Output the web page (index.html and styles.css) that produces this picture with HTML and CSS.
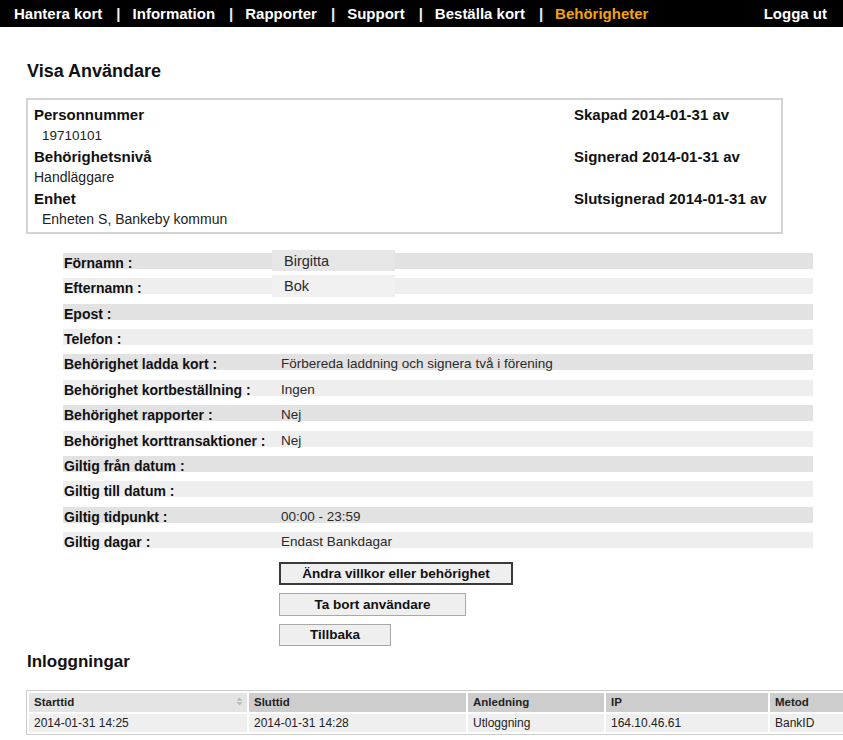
FILE: index.html
```html
<!DOCTYPE html>
<html lang="sv">
<head>
<meta charset="utf-8">
<title>Visa Användare</title>
<link rel="stylesheet" href="styles.css">
</head>
<body>
<nav class="topnav">
  <div class="nav-left">
    <a class="nav-link">Hantera kort</a><span class="sep">|</span>
    <a class="nav-link">Information</a><span class="sep">|</span>
    <a class="nav-link">Rapporter</a><span class="sep">|</span>
    <a class="nav-link">Support</a><span class="sep">|</span>
    <a class="nav-link">Beställa kort</a><span class="sep">|</span>
    <a class="nav-link active">Behörigheter</a>
  </div>
  <a class="nav-link">Logga ut</a>
</nav>

<main class="page">
  <h1 class="title">Visa Användare</h1>

  <section class="summary">
    <div class="sum-left">
      <div class="sum-label">Personnummer</div>
      <div class="sum-value indent small">19710101</div>
      <div class="sum-label">Behörighetsnivå</div>
      <div class="sum-value">Handläggare</div>
      <div class="sum-label">Enhet</div>
      <div class="sum-value indent">Enheten S, Bankeby kommun</div>
    </div>
    <div class="sum-right">
      <div class="sum-label">Skapad 2014-01-31 av</div>
      <div class="sum-gap"></div>
      <div class="sum-label">Signerad 2014-01-31 av</div>
      <div class="sum-gap"></div>
      <div class="sum-label">Slutsignerad 2014-01-31 av</div>
    </div>
  </section>

  <section class="details">
    <div class="row dark"><span class="lbl">Förnamn :</span><span class="field f-dark">Birgitta</span></div>
    <div class="row light"><span class="lbl">Efternamn :</span><span class="field f-light">Bok</span></div>
    <div class="row dark"><span class="lbl">Epost :</span><span class="val"></span></div>
    <div class="row light"><span class="lbl">Telefon :</span><span class="val"></span></div>
    <div class="row dark"><span class="lbl">Behörighet ladda kort :</span><span class="val">Förbereda laddning och signera två i förening</span></div>
    <div class="row light"><span class="lbl">Behörighet kortbeställning :</span><span class="val">Ingen</span></div>
    <div class="row dark"><span class="lbl">Behörighet rapporter :</span><span class="val">Nej</span></div>
    <div class="row light"><span class="lbl">Behörighet korttransaktioner :</span><span class="val">Nej</span></div>
    <div class="row dark"><span class="lbl">Giltig från datum :</span><span class="val"></span></div>
    <div class="row light"><span class="lbl">Giltig till datum :</span><span class="val"></span></div>
    <div class="row dark"><span class="lbl">Giltig tidpunkt :</span><span class="val">00:00 - 23:59</span></div>
    <div class="row light"><span class="lbl">Giltig dagar :</span><span class="val">Endast Bankdagar</span></div>
  </section>

  <div class="actions">
    <button class="btn btn-primary">Ändra villkor eller behörighet</button>
    <button class="btn btn-remove">Ta bort användare</button>
    <button class="btn btn-back">Tillbaka</button>
  </div>

  <h2 class="subtitle">Inloggningar</h2>

  <div class="table-wrap">
    <table class="logins">
      <colgroup>
        <col class="c-start">
        <col class="c-end">
        <col class="c-reason">
        <col class="c-ip">
        <col class="c-method">
      </colgroup>
      <thead>
        <tr>
          <th class="th-start"><svg class="sort" width="7" height="9" viewBox="0 0 7 9"><path d="M3.5 0.5 L6.5 3.8 H0.5 Z M3.5 8.5 L6.5 5.2 H0.5 Z" fill="#b8b8b8"/></svg>Starttid</th>
          <th>Sluttid</th>
          <th>Anledning</th>
          <th>IP</th>
          <th>Metod</th>
        </tr>
      </thead>
      <tbody>
        <tr>
          <td>2014-01-31 14:25</td>
          <td>2014-01-31 14:28</td>
          <td>Utloggning</td>
          <td>164.10.46.61</td>
          <td>BankID</td>
        </tr>
      </tbody>
    </table>
  </div>
</main>
</body>
</html>
```

FILE: styles.css
```css
* { box-sizing: border-box; }

html, body {
  margin: 0;
  padding: 0;
  background: #ffffff;
  font-family: "Liberation Sans", Arial, sans-serif;
  color: #111111;
  overflow: hidden;
}

/* top navigation */
.topnav {
  display: flex;
  justify-content: space-between;
  align-items: center;
  height: 27px;
  background: #000000;
  padding: 0 16px 0 14px;
  font-size: 15px;
  font-weight: bold;
  color: #ffffff;
}
.nav-left {
  display: flex;
  align-items: center;
}
.nav-link {
  color: #ffffff;
  text-decoration: none;
  white-space: nowrap;
}
.nav-link.active { color: #f2a40e; }
.sep {
  margin: 0 12px 0 14px;
  color: #f0f0f0;
  font-weight: bold;
}

/* page */
.page {
  padding: 0 0 0 27px;
}
.title {
  margin: 33px 0 16px 0;
  font-size: 18px;
  line-height: 22px;
  font-weight: bold;
}

/* summary box */
.summary {
  margin-left: -1px;
  width: 757px;
  border: 2px solid #d3d3d3;
  padding: 4px 0 2px 6px;
  display: grid;
  grid-template-columns: 1fr 207px;
}
.sum-label {
  font-size: 15px;
  font-weight: bold;
  line-height: 21px;
  white-space: nowrap;
}
.sum-value {
  font-size: 14px;
  line-height: 21px;
  color: #222222;
}
.sum-value.small { font-size: 13.5px; }
.sum-value.indent { padding-left: 8px; }
.sum-gap { height: 21px; }

/* details rows */
.details {
  margin: 19px 0 0 36px;
  width: 750px;
  display: grid;
  row-gap: 9.36px;
}
.row {
  display: grid;
  grid-template-columns: 209px 1fr;
  height: 16px;
  line-height: 20px;
}
.row.dark { background: #e2e2e2; }
.row.light { background: #eeeeee; }
.lbl {
  font-size: 14px;
  font-weight: bold;
  padding-left: 1px;
  white-space: nowrap;
  color: #111111;
}
.val {
  font-size: 13.5px;
  padding-left: 9px;
  color: #2a2a2a;
  white-space: nowrap;
}
.field {
  width: 123px;
  height: 22px;
  margin-top: -3px;
  padding: 1px 0 0 12px;
  font-size: 14.5px;
  line-height: 21px;
  color: #2a2a2a;
}
.f-dark { background: #e6e6e6; height: 21px; }
.f-light { background: #f1f1f1; }

/* buttons */
.actions {
  margin: 14px 0 0 252px;
  display: flex;
  flex-direction: column;
  align-items: flex-start;
  gap: 8px;
}
.btn {
  height: 23px;
  font-family: "Liberation Sans", Arial, sans-serif;
  font-size: 13.5px;
  font-weight: bold;
  color: #111111;
  background: #efefef;
  border: 1px solid #a8a8a8;
  padding: 0;
  text-align: center;
}
.btn-primary { width: 234px; border: 2px solid #3a3a3a; }
.btn-remove { width: 187px; }
.btn-back { width: 112px; height: 22px; }

/* logins */
.subtitle {
  margin: 6px 0 18px 0;
  font-size: 17px;
  line-height: 20px;
  font-weight: bold;
}
.table-wrap {
  margin-left: -1px;
  width: 817px;
  overflow: hidden;
}
.logins {
  width: 900px;
  border: 1px solid #cccccc;
  border-spacing: 2px;
  font-size: 12px;
  table-layout: fixed;
}
.c-start { width: 218px; }
.c-end { width: 217px; }
.c-reason { width: 136px; }
.c-ip { width: 162px; }
.c-method { width: 160px; }
.logins th {
  height: 19px;
  padding: 0 0 0 5px;
  text-align: left;
  font-weight: bold;
  font-size: 11.5px;
  color: #222222;
  background: #cdcdcd;
  white-space: nowrap;
}
.logins th.th-start {
  background: #e4e4e4;
  padding-right: 4px;
}
.sort {
  float: right;
  margin-top: 1px;
}
.logins td {
  height: 18px;
  padding: 0 0 0 5px;
  background: #efefef;
  color: #222222;
  white-space: nowrap;
}
```
